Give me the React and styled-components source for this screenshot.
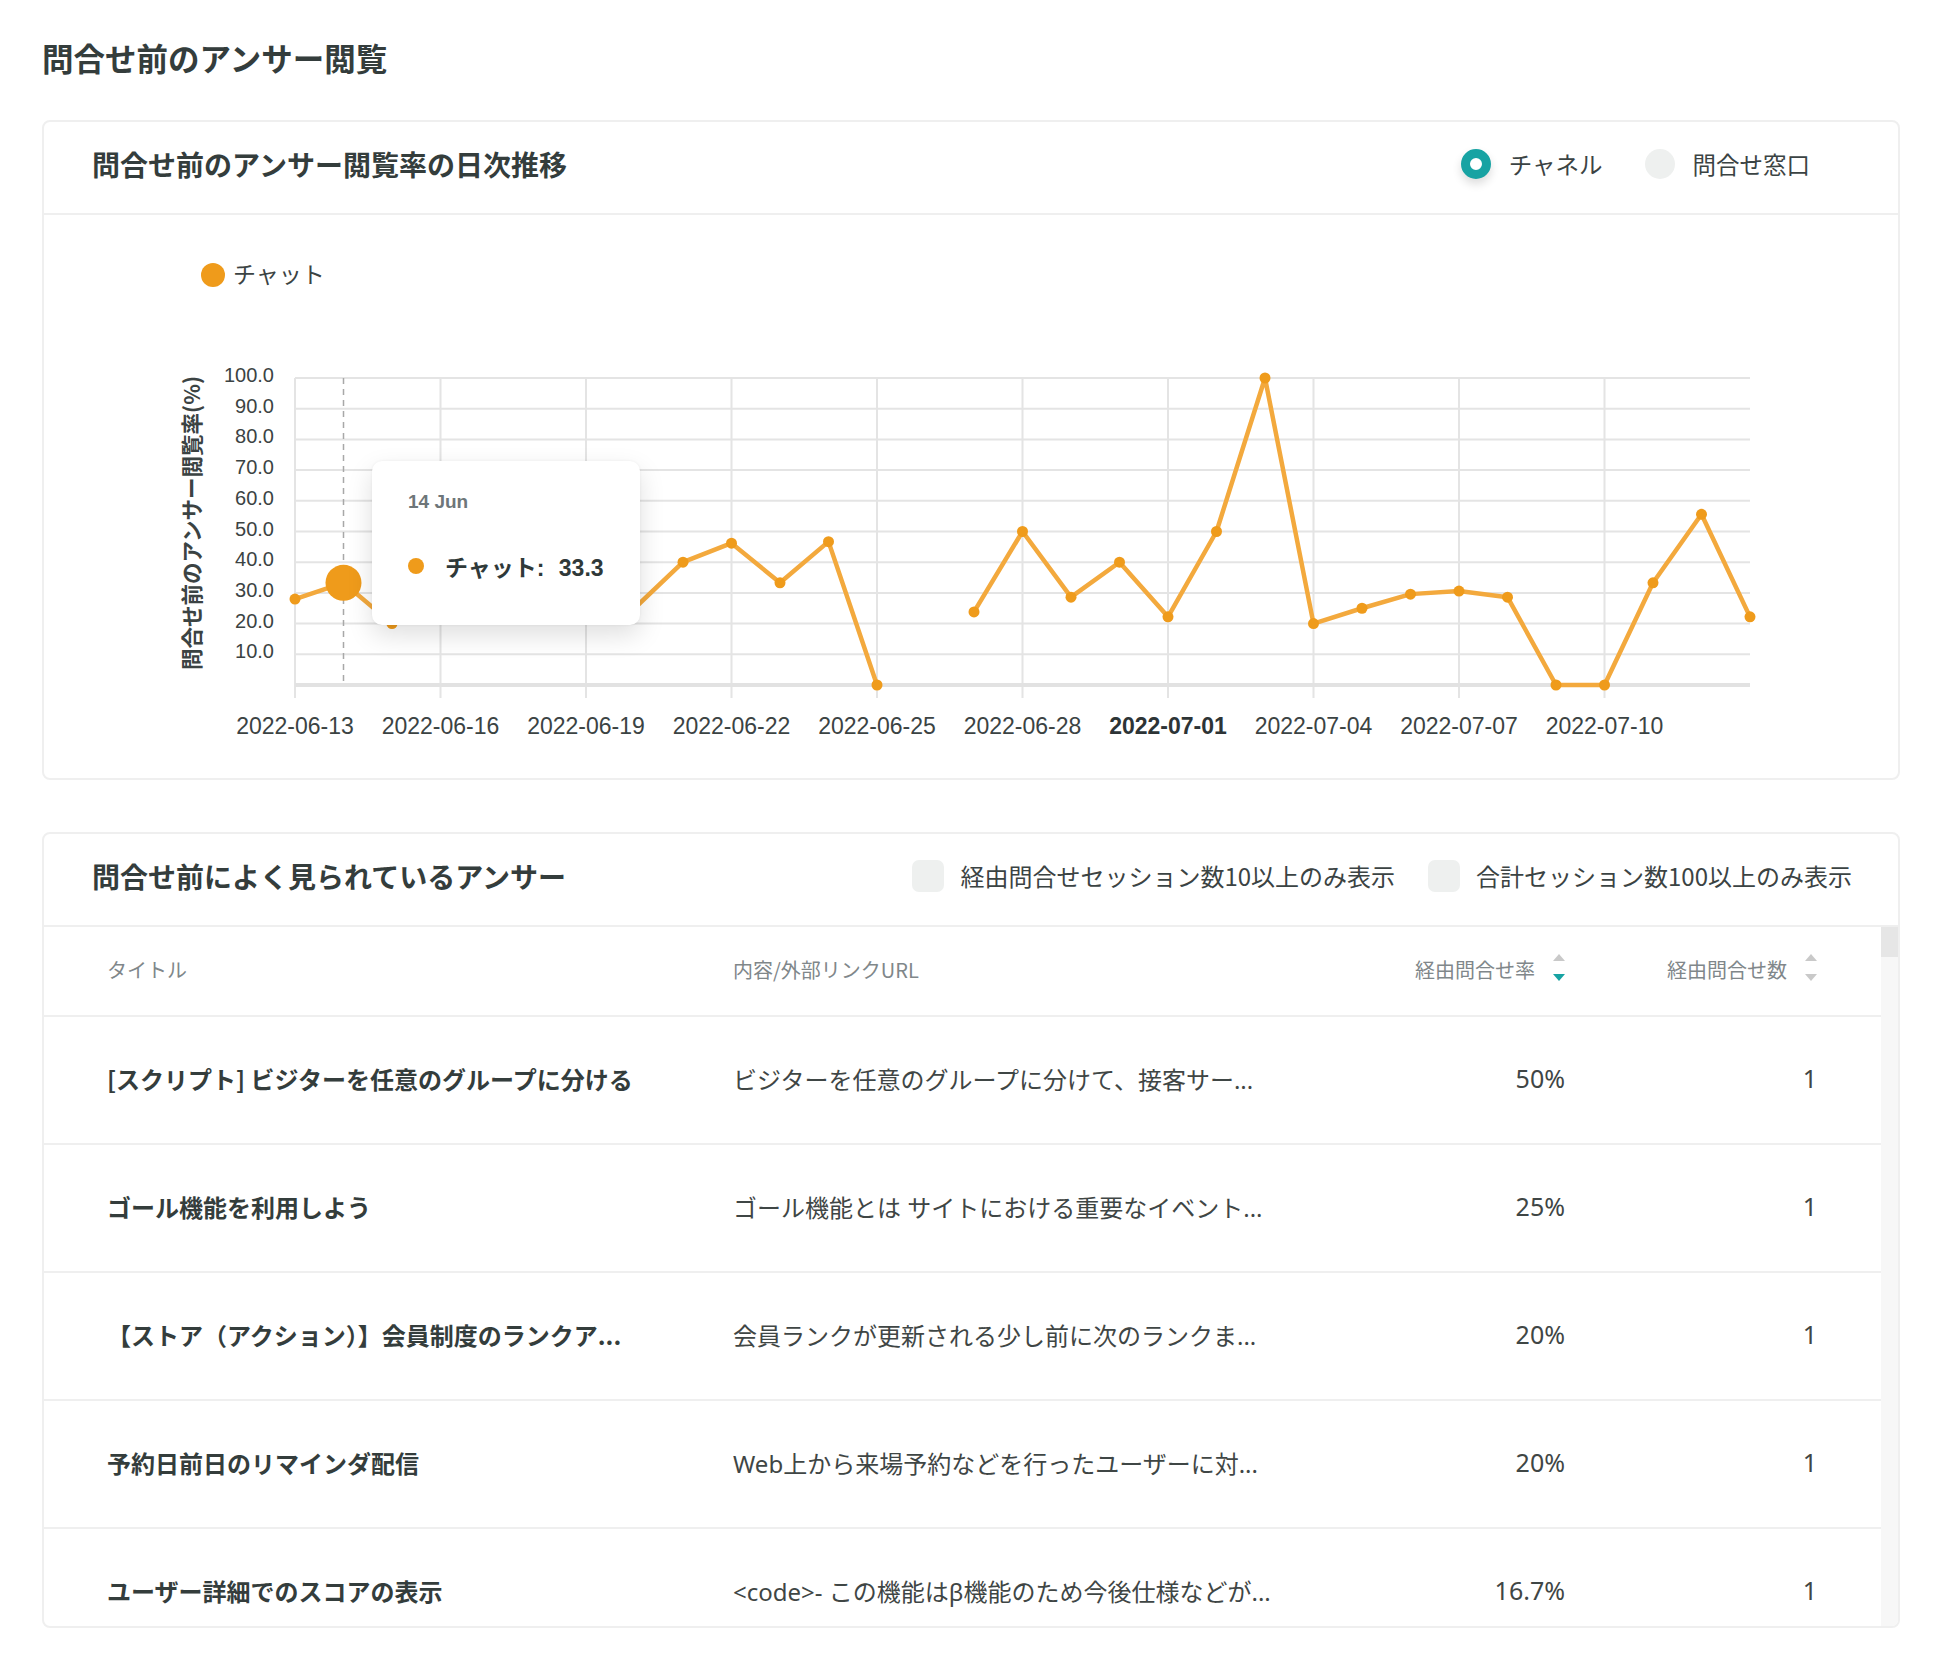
import React from "react";
import styled, { createGlobalStyle } from "styled-components";

const GlobalStyle = createGlobalStyle`
  html, body { margin: 0; padding: 0; background: #ffffff; }
  body {
    font-family: "Noto Sans", "Noto Sans CJK JP", sans-serif;
    color: #343d3c;
  }
  * { box-sizing: border-box; }
`;

const JP = `"Noto Sans CJK JP", "Noto Sans", sans-serif`;
const LATIN = `"Liberation Sans", "Noto Sans CJK JP", sans-serif`;
const TEAL = "#17a3a3";
const ORANGE = "#ef9b1b";
const LINE = "#f3a93d";
const TEXT = "#343d3c";
const BORDER = "#efefef";

const Page = styled.div`
  width: 1954px;
  padding: 37px 54px 30px 42px;
`;

const PageTitle = styled.h1`
  margin: 0 0 43px;
  font-family: ${JP};
  font-size: 31.5px;
  line-height: 40px;
  font-weight: 700;
  color: ${TEXT};
`;

const Stack = styled.div`
  display: flex;
  flex-direction: column;
  gap: 52px;
`;

const Card = styled.section`
  border: 2px solid ${BORDER};
  border-radius: 8px;
  background: #fff;
  overflow: hidden;
`;

const CardHeader = styled.header`
  display: flex;
  align-items: center;
  justify-content: space-between;
  height: 93px;
  padding: 0 ${(p) => p.$padRight}px 8px 48px;
  border-bottom: 2px solid ${BORDER};
`;

const CardTitle = styled.h2`
  margin: 0;
  font-family: ${JP};
  font-size: 28px;
  font-weight: 700;
  color: ${TEXT};
`;

const RadioGroup = styled.div`
  display: flex;
  align-items: center;
  gap: 42px;
`;

const RadioItem = styled.label`
  display: flex;
  align-items: center;
  gap: 18px;
  font-family: ${JP};
  font-size: 23.5px;
  color: #3b4343;
`;

const RadioDot = styled.span`
  width: 30px;
  height: 30px;
  border-radius: 50%;
  background: ${(p) => (p.$checked ? "#fff" : "#eef0ef")};
  border: ${(p) => (p.$checked ? `9px solid ${TEAL}` : "none")};
  box-shadow: ${(p) => (p.$checked ? "0 5px 10px rgba(0,0,0,0.14)" : "none")};
`;

const ChartBody = styled.div`
  position: relative;
  height: 563px;
`;

const ChartSvg = styled.svg`
  display: block;
`;

const Tooltip = styled.div`
  position: absolute;
  left: 328px;
  top: 246px;
  width: 268px;
  height: 164px;
  padding: 30px 36px;
  background: #fff;
  border-radius: 10px;
  box-shadow: 0 10px 26px rgba(0, 0, 0, 0.13), 0 0 3px rgba(0, 0, 0, 0.06);
`;

const TooltipDate = styled.div`
  font-family: ${LATIN};
  font-size: 19px;
  line-height: 22px;
  font-weight: 700;
  color: #6e7679;
`;

const TooltipRow = styled.div`
  display: flex;
  align-items: center;
  gap: 21px;
  margin-top: 38px;
  height: 30px;
`;

const TooltipDot = styled.span`
  width: 16px;
  height: 16px;
  border-radius: 50%;
  background: ${ORANGE};
`;

const TooltipValue = styled.span`
  font-family: ${LATIN};
  font-size: 23px;
  font-weight: 700;
  word-spacing: 8px;
  color: #2f3939;
`;

const FilterGroup = styled.div`
  display: flex;
  align-items: center;
  gap: 33px;
`;

const CheckItem = styled.label`
  display: flex;
  align-items: center;
  gap: 16px;
  font-family: ${JP};
  font-size: 24px;
  color: #3b4343;
`;

const CheckBox = styled.span`
  width: 32px;
  height: 32px;
  border-radius: 7px;
  background: #eef0ef;
`;

const TableWrap = styled.div`
  display: flex;
  height: 699px;
  overflow: hidden;
`;

const Table = styled.div`
  flex: 1;
  overflow: hidden;
`;

const ScrollTrack = styled.div`
  width: 17px;
  background: #f7f7f7;
`;

const ScrollThumb = styled.div`
  height: 30px;
  background: #e6e6e6;
`;

const Row = styled.div`
  display: grid;
  grid-template-columns: 626px 582px 250px 252px;
  align-items: center;
  padding: 0 64px 0 63px;
  border-bottom: 2px solid ${BORDER};
`;

const HeaderRow = styled(Row)`
  height: 90px;
  padding-bottom: 4px;
  font-family: ${JP};
  font-size: 20px;
  color: #80878a;
`;

const BodyRow = styled(Row)`
  height: 128px;
  padding-bottom: 4px;
`;

const HeadCell = styled.div`
  display: flex;
  align-items: center;
  justify-content: ${(p) => (p.$right ? "flex-end" : "flex-start")};
  gap: 18px;
`;

const TitleCell = styled.div`
  font-family: ${JP};
  font-size: 24px;
  font-weight: 700;
  color: ${TEXT};
  white-space: nowrap;
  overflow: hidden;
`;

const ContentCell = styled.div`
  font-family: "Noto Sans", "Noto Sans CJK JP", sans-serif;
  font-size: 24px;
  color: #3f4645;
  white-space: nowrap;
  overflow: hidden;
`;

const NumCell = styled.div`
  text-align: right;
  font-family: "Noto Sans", "Noto Sans CJK JP", sans-serif;
  font-size: 25px;
  color: #3f4645;
`;

const SortIcon = ({ active }) => (
  <svg width="12" height="30" viewBox="0 0 12 30">
    <polygon points="0,7 6,0 12,7" fill="#c9c9c9" />
    <polygon points="0,20 12,20 6,27" fill={active ? TEAL : "#c9c9c9"} />
  </svg>
);

const DATA = [
  28, 33.3, 20, 22.2, 25, 28.6, 22.2, 25, 40, 46.2, 33.3, 46.7, 0, null, 23.8,
  50, 28.6, 40, 22.2, 50, 100, 20, 25, 29.6, 30.6, 28.6, 0, 0, 33.3, 55.6, 22.2,
];
const DATES = [
  "2022-06-13", "2022-06-16", "2022-06-19", "2022-06-22", "2022-06-25",
  "2022-06-28", "2022-07-01", "2022-07-04", "2022-07-07", "2022-07-10",
];

const X0 = 295;
const DX = 48.5;
const Y0 = 685;
const SY = 3.07;
const px = (i) => X0 + i * DX;
const py = (v) => Y0 - v * SY;

function buildPaths() {
  const paths = [];
  let cur = "";
  DATA.forEach((v, i) => {
    if (v === null) {
      if (cur) paths.push(cur);
      cur = "";
      return;
    }
    cur += `${cur ? "L" : "M"}${px(i)},${py(v)} `;
  });
  if (cur) paths.push(cur);
  return paths;
}

const Chart = () => {
  const ticks = [10, 20, 30, 40, 50, 60, 70, 80, 90, 100];
  const xEnd = px(30);
  return (
    <ChartSvg width="1854" height="563" viewBox="0 0 1854 563">
      <g transform="translate(-44,-215)">
        <circle cx="213" cy="275" r="12" fill={ORANGE} />
        <text x="233" y="283" fontSize="23" fontFamily={JP} fill="#3b4343">
          チャット
        </text>

        <text
          x="190"
          y="523"
          transform="rotate(-90 190 523)"
          textAnchor="middle"
          dominantBaseline="central"
          fontSize="21.5"
          fontWeight="700"
          fontFamily={JP}
          fill="#3b4343"
        >
          問合せ前のアンサー閲覧率(%)
        </text>

        {ticks.map((t) => (
          <g key={t}>
            <line x1={X0} x2={xEnd} y1={py(t)} y2={py(t)} stroke="#e4e4e4" strokeWidth="2" />
            <text
              x="274"
              y={py(t) + 4}
              textAnchor="end"
              fontSize="20"
              fontFamily={LATIN}
              fill="#3b4343"
            >
              {t.toFixed(1)}
            </text>
          </g>
        ))}
        {DATES.map((d, k) => (
          <g key={d}>
            <line x1={px(k * 3)} x2={px(k * 3)} y1={py(100)} y2={698} stroke="#e4e4e4" strokeWidth="2" />
            <text
              x={px(k * 3)}
              y="734"
              textAnchor="middle"
              fontSize="23"
              fontFamily={LATIN}
              fontWeight={d === "2022-07-01" ? 700 : 400}
              fill={d === "2022-07-01" ? "#2d3436" : "#3b4343"}
            >
              {d}
            </text>
          </g>
        ))}
        <line x1={X0} x2={xEnd} y1={Y0} y2={Y0} stroke="#e2e2e2" strokeWidth="4" />

        <line x1={px(1)} x2={px(1)} y1={py(100)} y2={Y0} stroke="#a8a8a8" strokeWidth="1.5" strokeDasharray="6 5" />

        {buildPaths().map((d, i) => (
          <path key={i} d={d} fill="none" stroke={LINE} strokeWidth="4.5" strokeLinejoin="round" strokeLinecap="round" />
        ))}
        {DATA.map((v, i) =>
          v === null ? null : <circle key={i} cx={px(i)} cy={py(v)} r="5.5" fill={ORANGE} />
        )}
        <circle cx={px(1)} cy={py(33.3)} r="18" fill={ORANGE} />
      </g>
    </ChartSvg>
  );
};

const ROWS = [
  {
    title: "[スクリプト] ビジターを任意のグループに分ける",
    content: "ビジターを任意のグループに分けて、接客サー...",
    rate: "50%",
    count: "1",
  },
  {
    title: "ゴール機能を利用しよう",
    content: "ゴール機能とは サイトにおける重要なイベント...",
    rate: "25%",
    count: "1",
  },
  {
    title: "【ストア（アクション）】会員制度のランクア...",
    content: "会員ランクが更新される少し前に次のランクま...",
    rate: "20%",
    count: "1",
  },
  {
    title: "予約日前日のリマインダ配信",
    content: "Web上から来場予約などを行ったユーザーに対...",
    rate: "20%",
    count: "1",
  },
  {
    title: "ユーザー詳細でのスコアの表示",
    content: "<code>- この機能はβ機能のため今後仕様などが...",
    rate: "16.7%",
    count: "1",
  },
];

export default function App() {
  return (
    <>
      <GlobalStyle />
      <Page>
        <PageTitle>問合せ前のアンサー閲覧</PageTitle>
        <Stack>
          <Card>
            <CardHeader $padRight={88}>
              <CardTitle>問合せ前のアンサー閲覧率の日次推移</CardTitle>
              <RadioGroup>
                <RadioItem>
                  <RadioDot $checked />
                  チャネル
                </RadioItem>
                <RadioItem>
                  <RadioDot />
                  問合せ窓口
                </RadioItem>
              </RadioGroup>
            </CardHeader>
            <ChartBody>
              <Chart />
              <Tooltip>
                <TooltipDate>14 Jun</TooltipDate>
                <TooltipRow>
                  <TooltipDot />
                  <TooltipValue>チャット: 33.3</TooltipValue>
                </TooltipRow>
              </Tooltip>
            </ChartBody>
          </Card>

          <Card>
            <CardHeader $padRight={46}>
              <CardTitle>問合せ前によく見られているアンサー</CardTitle>
              <FilterGroup>
                <CheckItem>
                  <CheckBox />
                  経由問合せセッション数10以上のみ表示
                </CheckItem>
                <CheckItem>
                  <CheckBox />
                  合計セッション数100以上のみ表示
                </CheckItem>
              </FilterGroup>
            </CardHeader>
            <TableWrap>
              <Table>
                <HeaderRow>
                  <HeadCell>タイトル</HeadCell>
                  <HeadCell>内容/外部リンクURL</HeadCell>
                  <HeadCell $right>
                    経由問合せ率
                    <SortIcon active />
                  </HeadCell>
                  <HeadCell $right>
                    経由問合せ数
                    <SortIcon />
                  </HeadCell>
                </HeaderRow>
                {ROWS.map((r) => (
                  <BodyRow key={r.title}>
                    <TitleCell>{r.title}</TitleCell>
                    <ContentCell>{r.content}</ContentCell>
                    <NumCell>{r.rate}</NumCell>
                    <NumCell>{r.count}</NumCell>
                  </BodyRow>
                ))}
              </Table>
              <ScrollTrack>
                <ScrollThumb />
              </ScrollTrack>
            </TableWrap>
          </Card>
        </Stack>
      </Page>
    </>
  );
}
